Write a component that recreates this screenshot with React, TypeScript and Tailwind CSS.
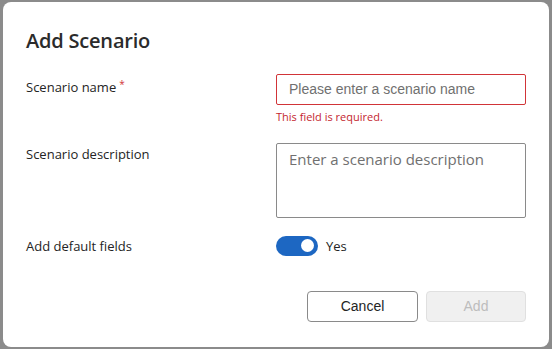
import React from "react";

export default function App() {
  const seg = { fontFamily: '"Open Sans", "Noto Sans", sans-serif' } as React.CSSProperties;
  const hel = { fontFamily: '"Liberation Sans", Arial, sans-serif' } as React.CSSProperties;
  return (
    <div className="w-[552px] h-[349px] bg-[#8b8b8b] pt-[2px] pl-[3px] overflow-hidden">
      <div className="w-[546px] h-[345px] bg-white rounded-[8px] pl-[23px] pr-[23px] pt-[25px]" style={seg}>
        <div className="text-[20px] leading-[28px] font-semibold text-[#2b2b2b] tracking-[-0.2px]">Add Scenario</div>

        <div className="mt-[19px] grid grid-cols-[250px_250px]">
          <div className="pt-[3px] text-[13px] leading-[20px] text-[#242424]">
            Scenario name<span className="text-[#d13438] text-[10px] align-top ml-[3px] relative top-[-3px]">*</span>
          </div>
          <div>
            <div className="h-[31px] border border-[#d13438] rounded-[2px] flex items-center pl-[12px] text-[14px] text-[#707070]" style={hel}>
              Please enter a scenario name
            </div>
            <div className="mt-[4px] text-[11px] leading-[16px] text-[#c4262e]">This field is required.</div>
          </div>

          <div className="mt-[18px] pt-[1px] text-[13px] leading-[20px] text-[#242424]">Scenario description</div>
          <div className="mt-[18px] h-[75px] border border-[#8a8a8a] rounded-[2px] pl-[12px] pt-[4px] text-[15px] leading-[22px] text-[#707070]">
            Enter a scenario description
          </div>

          <div className="mt-[17px] h-[21px] flex items-center pt-[2px] text-[13px] text-[#242424]">Add default fields</div>
          <div className="mt-[17px] h-[21px] flex items-center">
            <div className="w-[42px] h-[20px] rounded-full bg-[#1d67c2] flex items-center justify-end pr-[4px]">
              <div className="w-[13px] h-[13px] rounded-full bg-white" />
            </div>
            <span className="ml-[8px] pt-[2px] text-[13px] text-[#242424]">Yes</span>
          </div>
        </div>

        <div className="mt-[35px] flex justify-end gap-[8px]" style={hel}>
          <div className="w-[111px] h-[31px] border border-[#8a8a8a] rounded-[4px] flex items-center justify-center text-[14px] text-[#242424]">Cancel</div>
          <div className="w-[100px] h-[31px] border border-[#e0e0e0] bg-[#f0f0f0] rounded-[4px] flex items-center justify-center text-[14px] text-[#bdbdbd]">Add</div>
        </div>
      </div>
    </div>
  );
}
